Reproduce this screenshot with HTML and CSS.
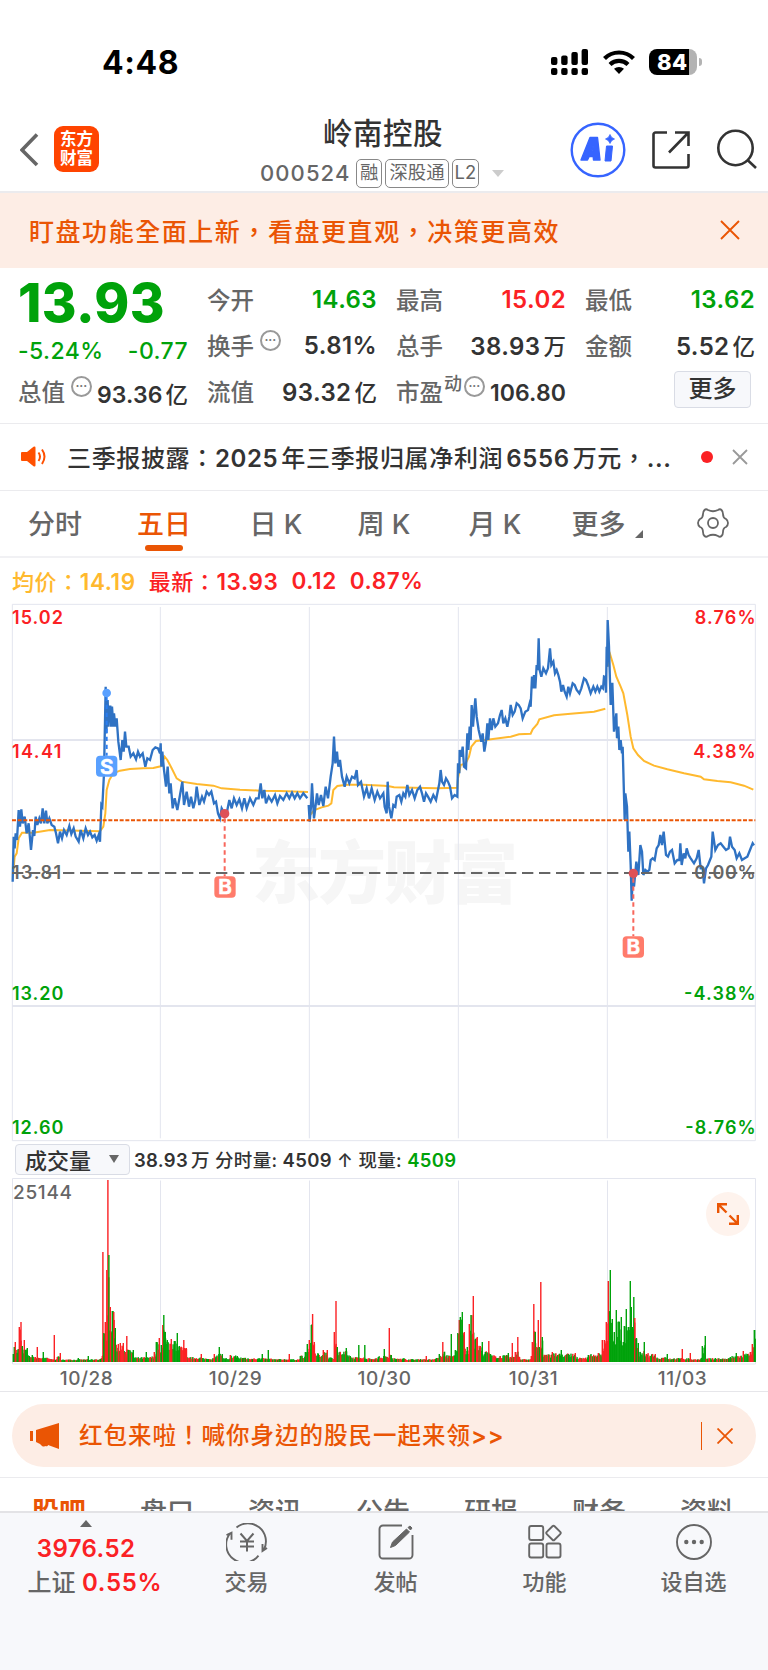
FILE: index.html
```html
<!DOCTYPE html>
<html lang="zh-CN">
<head>
    <meta charset="UTF-8">
    <meta name="viewport" content="width=device-width, initial-scale=1.0">
    <title>岭南控股 000524</title>
    <link rel="stylesheet" href="styles.css">
</head>
<body>
    <div class="status-bar">
        <div class="clock">4:48</div>
        <svg class="signal" width="38" height="27" viewBox="0 0 38 27">
            <rect x="0" y="8" width="6.4" height="8" rx="2"/>
            <rect x="10.2" y="6.5" width="6.4" height="9.5" rx="2"/>
            <rect x="20.4" y="3" width="6.4" height="13" rx="2"/>
            <rect x="30.6" y="0" width="6.4" height="16" rx="2"/>
            <rect x="0" y="19" width="6.4" height="7" rx="2"/>
            <rect x="10.2" y="19" width="6.4" height="7" rx="2"/>
            <rect x="20.4" y="19" width="6.4" height="7" rx="2"/>
            <rect x="30.6" y="19" width="6.4" height="7" rx="2"/>
        </svg>
        <svg class="wifi" width="32" height="25" viewBox="0 0 32 25">
            <path d="M1.5 8.500a20.500 20.500 0 0 1 29 0" fill="none" stroke="#000" stroke-width="4.2"/>
            <path d="M7 14.500a13 13 0 0 1 18 0" fill="none" stroke="#000" stroke-width="4.2"/>
            <path d="M16 24l-5-5.200a7.500 7.500 0 0 1 10 0z"/>
        </svg>
        <div class="battery"><span>84</span></div>
        <div class="battery-tip"></div>
    </div>

    <header class="header">
        <svg class="back" width="19" height="34" viewBox="0 0 19 34"><path d="M17 1.500L2 17l15 15" fill="none" stroke="#666" stroke-width="3.6"/></svg>
        <div class="logo">东方<br>财富</div>
        <div class="stock">
            <h1>岭南控股</h1>
            <div class="code">
                <span class="num">000524</span>
                <span class="tag">融</span>
                <span class="tag">深股通</span>
                <span class="tag">L2</span>
                <i class="drop"></i>
            </div>
        </div>
        <svg class="ai" width="56" height="56" viewBox="0 0 56 56">
            <circle cx="28" cy="28" r="26.3" fill="none" stroke="#3664ff" stroke-width="2.4"/>
            <path d="M20 15.500h7.500L30 38h-6.500l-.3-3.500h-4L17.500 38H11z M21.500 29h2l-.4-5z" fill="#3664ff" fill-rule="evenodd" stroke="#3664ff" stroke-width="1.4" stroke-linejoin="round"/>
            <path d="M36.500 24h6L41 39h-6z" fill="#3664ff" stroke="#3664ff" stroke-linejoin="round"/>
            <path d="M40 12.500q1 3.500 4.500 4.500q-3.500 1-4.500 4.500q-1-3.500-4.500-4.500q3.500-1 4.500-4.500z" fill="#3664ff" stroke="#3664ff" stroke-width=".8"/>
        </svg>
        <svg class="share" width="40" height="40" viewBox="0 0 40 40" fill="none" stroke="#333" stroke-width="2.6">
            <path d="M16 2.500H4.500a2 2 0 0 0-2 2v31a2 2 0 0 0 2 2h31a2 2 0 0 0 2-2V24"/>
            <path d="M24 2.500h13.500V16M37 3L18 22.500"/>
        </svg>
        <svg class="search" width="42" height="42" viewBox="0 0 42 42" fill="none" stroke="#333" stroke-width="2.6">
            <circle cx="19.5" cy="19" r="17.2"/><path d="M31.500 31L40 39"/>
        </svg>
    </header>

    <div class="banner">
        <span lang="zh-TW">盯盘功能全面上新，看盘更直观，决策更高效</span>
        <svg width="20" height="20" viewBox="0 0 20 20"><path d="M1 1l18 18M19 1L1 19" stroke="#ea5504" stroke-width="1.9"/></svg>
    </div>

    <section class="quote">
        <div class="col">
            <div class="price">13.93</div>
            <div class="change"><span>-5.24%</span><span>-0.77</span></div>
            <div class="row small"><label>总值</label><i class="more-dot">•••</i><b>93.36<em>亿</em></b></div>
        </div>
        <div class="col">
            <div class="row"><label>今开</label><b class="green">14.63</b></div>
            <div class="row"><label>换手</label><i class="more-dot">•••</i><b>5.81%</b></div>
            <div class="row"><label>流值</label><b>93.32<em>亿</em></b></div>
        </div>
        <div class="col">
            <div class="row"><label>最高</label><b class="red">15.02</b></div>
            <div class="row"><label>总手</label><b>38.93<em>万</em></b></div>
            <div class="row small"><label>市盈</label><sup>动</sup><i class="more-dot">•••</i><b>106.80</b></div>
        </div>
        <div class="col">
            <div class="row"><label>最低</label><b class="green">13.62</b></div>
            <div class="row"><label>金额</label><b>5.52<em>亿</em></b></div>
            <div class="row"><button class="more-btn">更多</button></div>
        </div>
    </section>

    <div class="news">
        <svg width="26" height="22" viewBox="0 0 26 22">
            <path d="M1 6h5l6.500-5.300q2-.8 2 1v17.600q0 1.800-2 1L6 15H1q-1 0-1-1V7q0-1 1-1z" fill="#ff5000"/>
            <path d="M17.500 6.500q3 4 0 8.500M21 3.500q5 7 0 14.500" fill="none" stroke="#ff5000" stroke-width="2"/>
        </svg>
        <p lang="zh-TW">三季报披露：<b>2025</b><em></em>年三季报归属净利润<em></em><b>6556</b><em></em>万元，<b>...</b></p>
        <span class="dot"></span>
        <svg width="16" height="16" viewBox="0 0 16 16"><path d="M1 1l14 14M15 1L1 15" stroke="#999" stroke-width="1.8"/></svg>
    </div>

    <nav class="tabs">
        <span>分时</span>
        <span class="active">五日</span>
        <span>日 K</span>
        <span>周 K</span>
        <span>月 K</span>
        <span class="tab-more">更多<i></i></span>
        <span class="gear">
            <svg width="32" height="32" viewBox="-16 -16 32 32" fill="none" stroke="#666" stroke-width="1.8" stroke-linejoin="round">
                <path d="M-8.500 -13Q-7 -14.500 -5 -13Q0 -10.500 5 -13Q7 -14.500 8.500 -13Q10 -11.500 10 -9Q10 -5 13 -4Q15 -2.500 15 0Q15 2.500 13 4Q10 5 10 9Q10 11.500 8.500 13Q7 14.500 5 13Q0 10.500 -5 13Q-7 14.500 -8.500 13Q-10 11.500 -10 9Q-10 5 -13 4Q-15 2.500 -15 0Q-15 -2.500 -13 -4Q-10 -5 -10 -9Q-10 -11.500 -8.500 -13z"/>
                <circle r="5"/>
            </svg>
        </span>
    </nav>

    <div class="legend" lang="zh-TW">
        <span class="avg">均价：<b>14.19</b></span>
        <span>最新：<b>13.93</b></span>
        <b>0.12</b>
        <b>0.87%</b>
    </div>

    <!-- price chart, three units per pixel -->
    <svg class="price-chart" viewBox="36 132 2232 1611">
        <text class="watermark" x="756" y="1014" textLength="798">东方财富</text>
        <g class="grid">
            <path d="M481 141V1735M928 141V1735M1375 141V1735M1822 141V1735"/>
            <path d="M36 540H2267M36 1338H2267" stroke-width="6"/>
            <path d="M37 133H2266V1742H37z"/>
        </g>
        <polyline class="avg-line" points="40,935 44,890 50,880 56,835 66,818 100,818 150,810 300,814 310,800 316,760 320,690 328,660 340,640 360,632 390,627 430,625 460,624 482,619 494,590 502,600 515,625 530,655 545,665 590,672 640,677 665,685 720,689 780,692 840,693 924,696"/>
        <polyline class="avg-line" points="930,765 943,750 965,742 985,737 994,730 1000,690 1012,678 1040,674 1090,674 1152,677 1167,679 1182,682 1242,683 1312,685 1372,683 1374,655 1382,615 1397,610 1407,590 1414,560 1428,543 1462,539 1532,530 1557,523 1592,521 1598,508 1612,492 1618,478 1662,466 1712,461 1782,455 1816,446"/>
        <polyline class="avg-line" points="1824,320 1828,275 1840,315 1849,350 1862,380 1870,400 1882,465 1892,530 1900,565 1914,585 1932,603 1962,617 2002,628 2052,640 2102,650 2112,658 2152,663 2192,667 2232,677 2260,689"/>
        <polyline class="price-line" points="38,965 41,830 44,865 47,820 51,840 56,750 60,800 64,748 68,790 74,770 80,820 86,790 93,870 99,810 103,828 107,770 112,795 118,775 123,790 128,745 133,790 138,752 142,790 148,775 155,795 163,800 168,820 174,850 180,815 186,835 192,810 200,825 208,798 214,822 221,805 227,830 236,845 242,810 250,835 257,805 264,825 270,815 277,832 284,825 290,842 296,825 300,845 304,735 307,740 312,640 317,380 319,520 323,420 325,500 327,440 331,440 333,500 336,440 340,500 342,460 346,500 350,475 355,545 362,600 367,540 371,575 375,515 379,560 386,560 392,590 400,580 408,598 414,575 420,590 428,580 436,620 442,595 450,600 458,570 466,562 474,565 480,580 482,550 484,620 487,575 492,630 498,680 503,620 508,700 512,670 518,745 524,715 532,750 540,705 547,665 552,735 560,695 567,740 573,710 580,745 586,720 590,680 598,735 606,710 612,725 620,695 627,705 634,695 642,730 648,725 654,760 660,775 665,745 673,760 680,760 688,720 695,745 702,715 710,735 718,718 726,745 733,715 740,745 750,715 760,735 768,715 776,715 782,670 787,715 793,690 798,730 806,710 815,725 825,705 832,730 840,708 850,720 860,700 868,715 876,698 884,715 892,700 900,715 910,700 922,715"/>
        <polyline class="price-line" points="926,735 929,785 933,740 936,670 942,775 947,735 951,700 956,735 963,705 970,738 977,680 984,715 992,650 998,610 1002,530 1006,610 1011,575 1015,620 1020,600 1026,650 1034,680 1040,650 1048,670 1056,650 1064,655 1070,630 1074,675 1083,665 1092,710 1100,685 1107,715 1115,685 1124,720 1132,695 1140,715 1150,700 1154,740 1160,760 1163,665 1167,740 1174,775 1180,735 1186,740 1190,710 1198,705 1204,725 1210,700 1216,710 1222,675 1228,705 1236,690 1244,715 1252,690 1260,680 1266,700 1272,725 1278,700 1284,710 1292,725 1300,705 1308,720 1314,690 1318,670 1322,630 1326,665 1332,675 1338,655 1344,665 1350,680 1356,715 1364,705 1372,710 1374,610 1378,640 1379,570 1384,590 1388,560 1392,620 1398,625 1402,520 1405,570 1409,500 1412,540 1415,435 1419,500 1422,460 1426,415 1430,470 1436,510 1444,545 1448,520 1453,575 1458,545 1462,490 1465,540 1470,475 1475,510 1480,475 1486,500 1494,490 1500,465 1505,450 1510,490 1516,475 1522,500 1528,470 1532,435 1538,465 1544,455 1550,430 1556,435 1562,445 1568,475 1576,455 1584,450 1589,430 1592,440 1596,350 1599,385 1602,345 1606,385 1610,315 1613,330 1616,235 1619,330 1624,350 1630,325 1638,340 1644,325 1650,265 1654,315 1660,305 1665,340 1670,330 1675,345 1680,365 1684,395 1689,375 1694,395 1700,410 1705,380 1710,400 1718,370 1724,375 1730,390 1738,400 1744,385 1752,355 1758,360 1764,375 1772,400 1780,380 1786,395 1792,380 1798,395 1804,380 1809,385 1812,350 1816,352 1818,398 1820,260 1821,320 1823,180 1827,260 1832,435 1837,368 1842,515 1849,460 1851,535 1855,500 1858,570 1862,540 1866,580 1868,560 1874,780 1876,700 1881,740 1885,875 1888,815 1892,915 1895,1022 1899,940 1902,980 1909,905 1915,945 1921,855 1926,875 1930,945 1936,930 1942,935 1948,930 1952,900 1958,895 1964,900 1970,865 1976,855 1981,825 1986,855 1991,815 1998,885 2004,890 2010,875 2016,870 2024,910 2032,900 2038,900 2041,850 2045,915 2051,880 2056,895 2060,865 2066,885 2072,895 2082,910 2090,895 2096,870 2102,925 2108,925 2112,970 2118,925 2124,915 2130,900 2134,890 2138,815 2146,870 2154,855 2162,850 2170,860 2178,870 2186,865 2190,830 2196,860 2204,870 2210,895 2218,880 2226,900 2234,895 2242,890 2250,870 2258,850 2262,856"/>
        <path class="last-line" d="M36 781H2266"/>
        <path class="zero-line" d="M36 939H2266"/>

        <g class="sell">
            <path d="M320 410V587"/>
            <circle cx="320" cy="399" r="13"/>
            <rect x="288" y="587" width="64" height="63" rx="12"/>
            <text x="320" y="641">S</text>
        </g>
        <g class="buy">
            <path d="M674 775V949"/>
            <circle cx="674" cy="761" r="14"/>
            <rect x="643" y="949" width="64" height="64" rx="12"/>
            <text x="675" y="1003">B</text>
            <path d="M1900 955V1129"/>
            <circle cx="1900" cy="940" r="14"/>
            <rect x="1868" y="1129" width="64" height="64" rx="12"/>
            <text x="1900" y="1183">B</text>
        </g>

        <g class="axis">
            <text class="up" x="36" y="191" textLength="153">15.02</text>
            <text class="up" x="36" y="594" textLength="148">14.41</text>
            <text x="36" y="957" textLength="147">13.81</text>
            <text class="down" x="36" y="1320" textLength="154">13.20</text>
            <text class="down" x="36" y="1721" textLength="154">12.60</text>
        </g>
        <g class="axis right">
            <text class="up" x="2267" y="191" textLength="183">8.76%</text>
            <text class="up" x="2267" y="594" textLength="187">4.38%</text>
            <text x="2267" y="957" textLength="184">0.00%</text>
            <text class="down" x="2267" y="1320" textLength="215">-4.38%</text>
            <text class="down" x="2267" y="1721" textLength="211">-8.76%</text>
        </g>
    </svg>

    <div class="volume-head">
        <button>成交量<i></i></button>
        <span><b>38.93</b><em></em>万 分时量: <b>4509</b> ↑ 现量: <b class="green">4509</b></span>
    </div>

    <div class="volume-wrap">
        <svg class="volume-chart" viewBox="12 1178 744 187">
            <g class="grid">
                <path d="M160.500 1180.500V1362M309.500 1180.500V1362M458.500 1180.500V1362M607.500 1180.500V1362M12.500 1178.500H755.500V1364H12.500z" stroke-width="1"/>
            </g>
            <g id="bars"></g>
            <text x="13" y="1199" textLength="59">25144</text>
        </svg>
        <div class="expand">
            <svg width="22" height="22" viewBox="0 0 22 22" fill="none" stroke="#ea5504" stroke-width="2.4"><path d="M1.200 10V1.200H10M1.500 1.500l8 8M20.800 12v8.800H12M20.500 20.500l-8-8"/></svg>
        </div>
    </div>
    <div class="dates"><span>10/28</span><span>10/29</span><span>10/30</span><span>10/31</span><span>11/03</span></div>

    <div class="promo-row">
        <div class="promo">
            <svg width="30" height="26" viewBox="0 0 30 26" fill="#ea5504"><path d="M0 8h3v10H0zM6 7L29 0v26l-11-4q0 2-3 1-1 1-3 0-1-1-2-2l-4-2z"/></svg>
            <span lang="zh-TW">红包来啦！喊你身边的股民一起来领<b>&gt;&gt;</b></span>
            <i></i>
            <svg width="16" height="16" viewBox="0 0 16 16"><path d="M.5.5l15 15M15.500.5l-15 15" stroke="#ea5504" stroke-width="1.8"/></svg>
        </div>
    </div>

    <nav class="sub-tabs">
        <span class="active">股吧</span><span>盘口</span><span>资讯</span><span>公告</span><span>研报</span><span>财务</span><span>资料</span>
    </nav>

    <footer class="footer">
        <div class="index">
            <i></i>
            <b>3976.52</b>
            <p>上证 <b>0.55%</b></p>
        </div>
        <div class="item">
            <svg width="42" height="38" viewBox="-21 -19 42 38">
                <path d="M-10.500 -14.500A18 18 0 0 1 17 7.500M11.500 13.700A18 18 0 0 1 -17 -8.500M-20.500 -7l5-2.200v7M20 6l-4.500 3V2"/>
                <path d="M-6.500 -8.500L0 -1l6.500-7.500M0 -1v10.500M-7 -.5h14M-7 4.500h14" stroke-width="2"/>
            </svg>
            <span>交易</span>
        </div>
        <div class="item">
            <svg width="36" height="38" viewBox="0 0 36 38">
                <path d="M24 2.500H5a3.500 3.500 0 0 0-3.500 3.500v26A3.500 3.500 0 0 0 5 35.500h26a3.500 3.500 0 0 0 3.500-3.500V12"/>
                <path d="M12.500 24.500l2-5.500L28.500 6l3 3L17.500 22.500zM30 4.500l2-1.500 2 2-1.500 2z" fill="#666" stroke-width="1"/>
            </svg>
            <span>发帖</span>
        </div>
        <div class="item">
            <svg width="36" height="38" viewBox="0 0 36 38">
                <rect x="2.2" y="3" width="14" height="14" rx="2"/><rect x="2.2" y="20.5" width="14" height="14" rx="2"/><rect x="19.5" y="20.5" width="14" height="14" rx="2"/>
                <rect x="21" y="4.5" width="11" height="11" rx="1.5" transform="rotate(45 26.5 10)"/>
            </svg>
            <span>功能</span>
        </div>
        <div class="item">
            <svg width="38" height="38" viewBox="-19 -19 38 38"><circle r="17"/><g fill="#666" stroke="none"><circle cx="-7.7" r="2.2"/><circle r="2.2"/><circle cx="7.7" r="2.2"/></g></svg>
            <span>设自选</span>
        </div>
    </footer>

    <script>
        // x, height, colour (r = up, g = down, empty = mixed)
        const volume = `13 8 g,14 15 g,15 20 r,18 13,19 35 r,20.7 40 r,22 16,24 22 r,25 12,27 14 g,29 6,32 7,35 5,37 15 r,39 4,43 10,47 4,50 3,53 2,54 27 r,55 2,57 5,60 9 r,64 2,70 1.5,78 4,85 2,88 6,95 2,100 3,102 6,102.6 110 r,103.5 29 g,105 40 r,106.5 92 r,107.6 182 r,108.6 107 g,110 55 r,112 51 g,113.5 50 r,115 34 g,118 18,120 19 r,123 19 r,125 10,126.5 26 r,128 12,133 12 g,137 4,146 10 g,150 5,154 10,156 20 g,159 24 r,161 17 g,162.5 37 r,163.5 47 g,165 30 g,167 22 g,171 23 r,174 21 g,177 29 g,179 16 g,181 15 r,183.5 22 r,186 14 r,189 4,201 8,208 3,214 8,219 15 g,222 8,225 3,230 7,237 6,245 4,252 3,262 8,265 3,268 12 g,271 3,279 2,289 8 r,291 2,300 6,305 10,307 18 g,309 22 r,311 37 g,312.3 48 r,314 20 r,318 8,323 12,327 12,331 4,334 30 r,335.7 61 r,337 15 g,340 10,346 14 g,350 6,357 4,358.5 17 g,360 4,364.5 17 g,366 3,378 5,384 13 g,387 5,389 34 r,391 7,396 3,405 3,420 2,426 6,430 2,436 4,439 8,442.5 20 r,444 10,449 6,451 28 g,453 6,455 12,457.5 29 g,459 42 r,460 45 g,462 50 g,464 30 r,467 15,469 38 r,470.7 47 g,473 66 r,475 23 g,477 25 r,480 16,482 20 g,485 10,488.5 21 r,490 8,500 6,508 9,510 5,512 19 r,514 5,515 10,517.5 25 r,519 5,527 2,531 6,532 20 r,533.5 58 r,535 30 g,536 15,538 42 r,539 15,540.5 80 r,542 25 g,545 7,552 10,561 12,568 8,575 9 r,580 4,588 7,598 9,602 22 r,604 22 r,606 40 r,608 81 r,610 92 g,612 43 g,614 30 g,616 52 g,619 40 g,621 45 g,623 20 g,624 36 g,626 53 g,628 35 g,630 81 g,631 55 g,632 35 g,633.5 65 g,634.5 44 r,636 24 g,638 19,640 10,644 20 g,646 8,655 8,663 4,667 8,673 3,681 4,682 13 r,683 3,690 9,692 2,701 4,702 16 g,705 26 g,706 3,715 4,722 3,730 5,736 9,740 6,743 11 r,747 8,750 10 r,752 18 r,754 32 g,755 32 g`
            .split(',').map(s => s.split(' '));

        const colors = { r: '#fb2124', g: '#00a20a' };
        let seed = 7;
        function rand() {
            seed = (seed * 16807) % 2147483647;
            return seed / 2147483647;
        }

        function bar(x, h, c) {
            return `<rect x="${x.toFixed(2)}" y="${(1362 - h).toFixed(2)}" width="1.4" height="${h.toFixed(2)}" fill="${colors[c]}"/>`;
        }

        let html = '';
        for (let i = 0; i < volume.length; i++) {
            const x = Math.min(+volume[i][0] - 0.4, 754), h = +volume[i][1];
            const next = volume[i + 1];
            if (next) {
                const low = Math.min(h, +next[1]);
                for (let p = x + 0.9; p < +next[0]; p += 0.9) {
                    const c = volume[i][2] && volume[i][2] === next[2] ? next[2] : (rand() > 0.45 ? 'g' : 'r');
                    html += bar(p, low * (0.45 + 0.55 * rand()) + 1, c);
                }
            }
            html += bar(x, h, volume[i][2] || (rand() > 0.5 ? 'g' : 'r'));
        }
        document.getElementById('bars').innerHTML = html;
    </script>
</body>
</html>
```
FILE: styles.css
```css
* {
    box-sizing: border-box;
}

body {
    margin: 0;
    width: 768px;
    height: 1670px;
    overflow: hidden;
    background-color: #fff;
    color: #333;
    font-family: Inter, "Noto Sans CJK TC", sans-serif;
    font-weight: 500;
    font-size: 24px;
}

h1, p {
    margin: 0;
}

em, i {
    font-style: normal;
}

em {
    font-weight: 500;
}

b {
    font-weight: 600;
}

svg {
    display: block;
    flex: none;
}

span, label, p, b {
    white-space: nowrap;
}

button {
    font: inherit;
    color: inherit;
    background-color: #f7f8fb;
    border: 1px solid #d9dce5;
    border-radius: 4px;
    padding: 0;
}

.green {
    color: #00a20a;
}

.red {
    color: #fb2124;
}

/* status bar */
.status-bar {
    height: 110px;
    padding: 14px 0 0 102px;
    display: flex;
    align-items: center;
}

.clock {
    width: 449px;
    color: #000;
    font-size: 32px;
    font-weight: 700;
    letter-spacing: 0.6px;
}

.wifi {
    margin-left: 14px;
}

.battery {
    margin-left: 14px;
    width: 48px;
    height: 26px;
    border-radius: 8px;
    background: linear-gradient(to right, #000 40px, #b3b3b3 40px);
    color: #fff;
    font-size: 22px;
    font-weight: 800;
    line-height: 26px;
    padding-left: 8px;
    letter-spacing: 0.4px;
}

.battery-tip {
    width: 3px;
    height: 8px;
    margin-left: 2px;
    border-radius: 0 3px 3px 0;
    background-color: #b3b3b3;
}

/* header */
.header {
    height: 83px;
    padding: 0 0 5px 20px;
    display: flex;
    align-items: center;
    border-bottom: 2px solid #ebebee;
}

.back {
    margin-top: 3px;
}

.logo {
    margin: 2px 0 0 15px;
    width: 45px;
    height: 46px;
    border-radius: 9px;
    background-color: #ff4400;
    color: #fff;
    font-size: 16.5px;
    font-weight: 700;
    line-height: 19px;
    text-align: center;
    padding-top: 4px;
}

.stock {
    margin-left: 161px;
    width: 250px;
}

h1 {
    padding-left: 63px;
    font-size: 29.5px;
    font-weight: 500;
    line-height: 38px;
    margin-top: 10px;
    letter-spacing: 0.5px;
}

.code {
    display: flex;
    align-items: center;
    height: 38px;
    margin-top: 2px;
    color: #666;
}

.code .num {
    width: 96px;
    font-size: 22px;
    letter-spacing: 1.1px;
}

.tag {
    height: 29px;
    padding: 0 3px;
    margin-right: 3px;
    border: 1.5px solid #888;
    border-radius: 5px;
    font-size: 18.4px;
    font-weight: 400;
    line-height: 25px;
}

.tag:nth-of-type(4) {
    padding: 0 2px;
}

.drop {
    margin-left: 10px;
    border: 6.5px solid transparent;
    border-top: 7px solid #ccc;
    border-bottom: 0;
}

.ai {
    margin: 3px 0 0 60px;
}

.share, .search {
    margin: 3px 0 0 25px;
}

.banner {
    height: 75px;
    padding: 0 28px 2px 29px;
    display: flex;
    align-items: center;
    justify-content: space-between;
    background-color: #fdede5;
    color: #ea5504;
    font-size: 25px;
    letter-spacing: 1.55px;
}

/* quote */
.quote {
    height: 156px;
    padding: 8px 0 0 18px;
    display: grid;
    grid-template-columns: repeat(4, 170px);
    column-gap: 19px;
    border-bottom: 1px solid #ebebee;
}

.row {
    height: 46px;
    display: flex;
    align-items: center;
}

.row label {
    color: #666;
    font-size: 23.5px;
}

.row b {
    margin-left: auto;
    font-size: 24px;
    letter-spacing: 0.4px;
}

.row b em {
    margin-left: 3px;
    font-size: 22.5px;
    letter-spacing: 0;
}

.row.small b {
    font-size: 23px;
    letter-spacing: 0.1px;
    padding-top: 3px;
}

.row sup {
    color: #666;
    font-size: 18px;
    line-height: 18px;
    margin: -14px 0 0 1px;
}

.more-dot {
    width: 21px;
    height: 21px;
    margin: -9px 0 0 6px;
    border: 2px solid #999;
    border-radius: 50%;
    color: #777;
    font-size: 6.5px;
    letter-spacing: 0.4px;
    line-height: 17px;
    text-align: center;
}

sup + .more-dot {
    margin-left: 2px;
}

.price {
    height: 52px;
    color: #00a20a;
    font-size: 53px;
    font-weight: 800;
    line-height: 54px;
    letter-spacing: 0.4px;
}

.change {
    height: 40px;
    display: flex;
    align-items: center;
    justify-content: space-between;
    color: #00a20a;
    font-size: 23px;
    letter-spacing: 0.4px;
    font-weight: 550;
    padding-top: 6px;
}

.more-btn {
    width: 77px;
    height: 37px;
    margin: -4px 4px 0 auto;
    font-size: 24px;
    line-height: 34px;
}

/* news */
.news {
    height: 67px;
    padding: 0 20px 0 21px;
    display: flex;
    align-items: center;
    border-bottom: 1px solid #ebebee;
}

.news p {
    width: 630px;
    margin-left: 20px;
    padding-bottom: 1px;
    font-size: 24px;
    letter-spacing: 0.65px;
}

.news em {
    margin-left: 3px;
}

.dot {
    width: 12px;
    height: 12px;
    margin-left: 4px;
    margin-right: 19px;
    border-radius: 50%;
    background-color: #fb2124;
}

/* tabs */
.tabs {
    height: 67px;
    display: grid;
    grid-template-columns: 110px 108px 116px 100px 122px 102px 110px;
    align-items: center;
    justify-items: center;
    color: #666;
    font-size: 27px;
    padding-bottom: 3px;
    border-bottom: 2px solid #f1f1f4;
}

.tabs .active {
    position: relative;
    color: #ea5504;
    font-weight: 500;
}

.tabs .active::after {
    content: "";
    position: absolute;
    left: 8px;
    bottom: -9px;
    width: 38px;
    height: 6px;
    border-radius: 3px;
    background-color: #ea5504;
}

.tab-more {
    display: flex;
    align-items: flex-end;
}

.tab-more i {
    margin: 0 0 4px 9px;
    border-left: 8px solid transparent;
    border-bottom: 8px solid #666;
}

.gear {
    padding-top: 2px;
}

.legend {
    height: 46px;
    padding: 0 0 2px 12px;
    display: flex;
    align-items: center;
    gap: 13px;
    color: #fb2124;
    font-size: 22px;
    letter-spacing: 0.6px;
}

.legend b {
    font-size: 22.5px;
}

.legend .avg {
    color: #ffb92e;
}

/* charts */
.price-chart {
    width: 744px;
    height: 537px;
    margin-left: 12px;
    overflow: visible;
}

.grid {
    fill: none;
    stroke: #e3e5ee;
    stroke-width: 3;
}

.watermark {
    fill: #f6f6f6;
    font-size: 204px;
    font-weight: 900;
}

.avg-line {
    fill: none;
    stroke: #ffb92e;
    stroke-width: 6;
}

.price-line {
    fill: none;
    stroke: #2f72c3;
    stroke-width: 7;
}

.last-line {
    stroke: #ea5504;
    stroke-width: 6;
    stroke-dasharray: 12 5;
}

.zero-line {
    stroke: #666;
    stroke-width: 6;
    stroke-dasharray: 34 17;
}

.sell, .buy {
    fill: #59a0ff;
    stroke: #2a7df0;
    stroke-width: 6;
    stroke-dasharray: 13 11;
}

.buy {
    fill: #ff7b6b;
    stroke: #f8675c;
}

.sell circle, .sell rect, .buy rect, .buy circle {
    stroke: none;
}

.buy circle {
    fill: #df5257;
}

.sell text, .buy text {
    fill: #fff;
    stroke: #fff;
    stroke-width: 2;
    stroke-dasharray: none;
    font-size: 62px;
    font-weight: 600;
    text-anchor: middle;
}

.axis {
    fill: #666;
    font-size: 54px;
    font-weight: 600;
}

.axis.right {
    text-anchor: end;
}

.axis .up {
    fill: #fb2124;
}

.axis .down {
    fill: #00a20a;
}

.volume-head {
    height: 37px;
    padding: 0 0 1px 15px;
    display: flex;
    align-items: center;
    font-size: 18.5px;
    letter-spacing: 0.3px;
}

.volume-head button {
    width: 115px;
    height: 31px;
    margin-right: 4px;
    padding: 0 0 1px 9px;
    display: flex;
    align-items: center;
    font-size: 22px;
    letter-spacing: 0;
}

.volume-head button i {
    margin-left: 18px;
    border: 5px solid transparent;
    border-top: 8px solid #666;
    border-bottom: 0;
}

.volume-head em {
    margin-left: 3px;
}

.volume-wrap {
    position: relative;
    width: 744px;
    height: 187px;
    margin-left: 12px;
}

.volume-chart {
    width: 744px;
    height: 187px;
}

.volume-chart text {
    fill: #666;
    font-size: 19px;
}

.expand {
    position: absolute;
    right: 6px;
    top: 14px;
    width: 44px;
    height: 44px;
    border-radius: 50%;
    background-color: #fef3ed;
    display: flex;
    align-items: center;
    justify-content: center;
}

.dates {
    height: 27px;
    padding: 0 12px;
    display: grid;
    grid-template-columns: repeat(5, 149px);
    align-items: center;
    justify-items: center;
    color: #666;
    font-size: 19px;
    font-weight: 550;
    letter-spacing: 0.5px;
    border-bottom: 1px solid #e6e6ea;
}

/* promo */
.promo-row {
    height: 86px;
    padding: 12px 12px 0;
    border-bottom: 1px solid #ebebee;
}

.promo {
    height: 63px;
    padding: 0 23px 0 18px;
    display: flex;
    align-items: center;
    border-radius: 32px;
    background-color: #fdede5;
    color: #ea5504;
    font-size: 23.5px;
    letter-spacing: 1px;
}

.promo span {
    margin-left: 19px;
    padding-bottom: 3px;
}

.promo i {
    margin: 0 15px 0 auto;
    width: 1.5px;
    height: 28px;
    background-color: #ea5504;
}

/* bottom */
.sub-tabs {
    height: 33px;
    padding: 17px 0 0 5px;
    overflow: hidden;
    display: grid;
    grid-template-columns: repeat(7, 108px);
    justify-items: center;
    color: #666;
    font-size: 27px;
    line-height: 36px;
}

.sub-tabs .active {
    color: #ea5504;
    font-weight: 700;
}

.footer {
    height: 160px;
    display: grid;
    grid-template-columns: 172px repeat(4, 149px);
    background-color: #f7f8fb;
    border-top: 2px solid #e3e3e6;
    color: #666;
}

.index {
    display: flex;
    flex-direction: column;
    align-items: center;
    padding-top: 7px;
}

.index i {
    border: 6.5px solid transparent;
    border-bottom: 7px solid #666;
    border-top: 0;
}

.index b {
    color: #fb2124;
    line-height: 44px;
    letter-spacing: 0.4px;
}

.index p {
    line-height: 24px;
    margin-left: 18px;
}

.index p b {
    line-height: 24px;
    letter-spacing: 0.7px;
}

.item {
    display: flex;
    flex-direction: column;
    align-items: center;
    padding-top: 10px;
    font-size: 22px;
}

.item svg {
    fill: none;
    stroke: #666;
    stroke-width: 1.9;
}

.item span {
    margin-top: 4px;
    line-height: 34px;
}
```
